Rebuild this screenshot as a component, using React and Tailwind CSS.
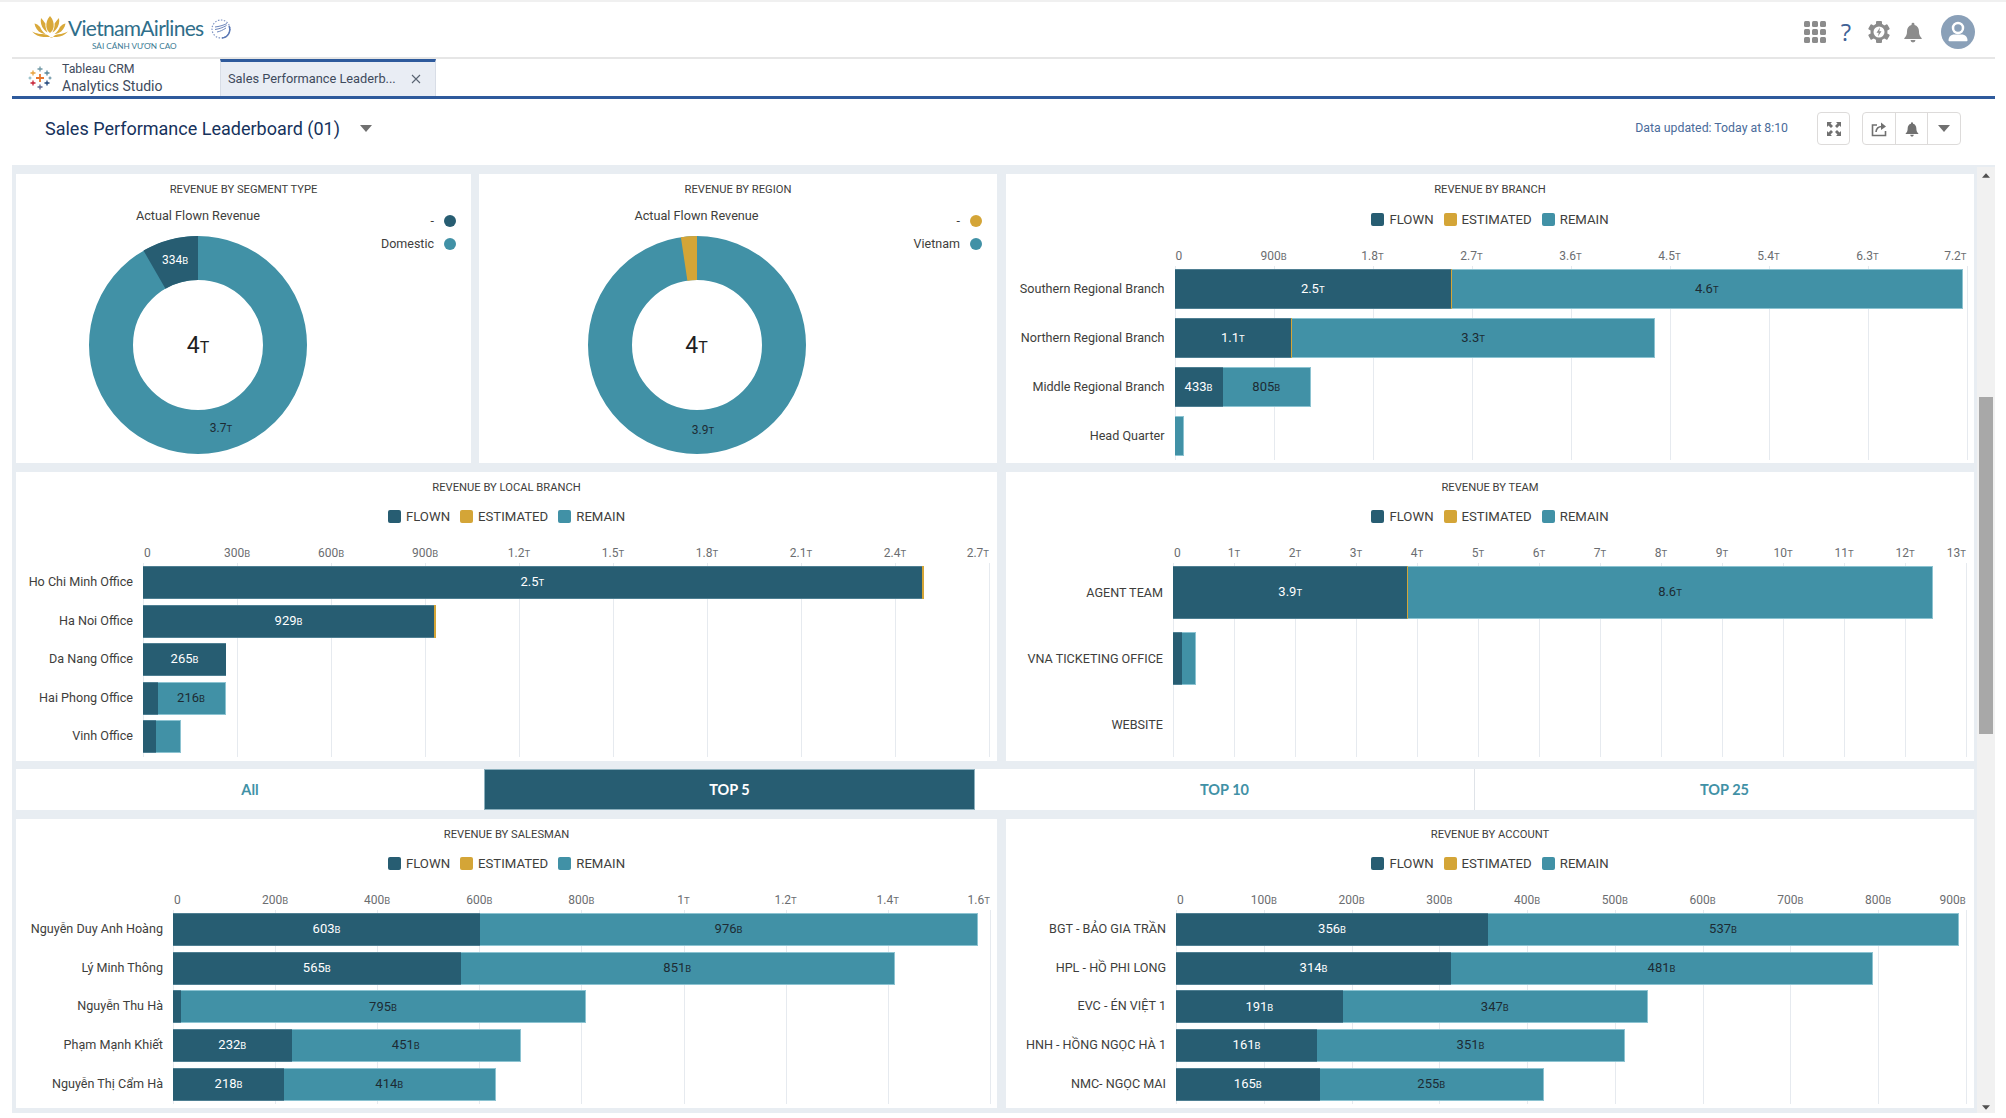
import React from "react";

const DARK = "#275d72";
const TEAL = "#4191a6";
const GOLD = "#d4a537";

function Val({ v, small = 9.5 }) {
  const m = String(v).match(/^(.*?)([TB])$/);
  if (!m) return <span>{v}</span>;
  return (
    <span>
      {m[1]}
      <span style={{ fontSize: small }}>{m[2]}</span>
    </span>
  );
}

function Legend({ h }) {
  const items = [
    ["FLOWN", "bg-[#275d72]"],
    ["ESTIMATED", "bg-[#d4a537]"],
    ["REMAIN", "bg-[#4191a6]"],
  ];
  return (
    <div className="flex items-center justify-center gap-[10px] text-[13.2px] text-[#3e3e3c]" style={{ height: h }}>
      {items.map(([t, c]) => (
        <div key={t} className="flex items-center gap-[5px]">
          <span className={"w-[13px] h-[13px] rounded-[2px] " + c} />
          <span>{t}</span>
        </div>
      ))}
    </div>
  );
}

function Title({ children }) {
  return (
    <div className="h-[32px] pt-[1px] flex items-center justify-center text-[11.2px] text-[#3e3e3c]">{children}</div>
  );
}

function Chart({ className, title, plotLeft, spacing, ticks, rows, barH, step, legendH = 26, labelPb = "pb-[1px]" }) {
  const last = ticks.length - 1;
  return (
    <div className={"bg-white h-[289px] flex flex-col shrink-0 " + className}>
      <Title>{title}</Title>
      <Legend h={legendH} />
      <div className="relative h-[20px] mt-[13px] text-[12px] text-[#6b6d70]">
        {ticks.map((t, i) => {
          const x = plotLeft + i * spacing;
          const tr = i === 0 ? "translate(1px,0)" : i === last ? "translate(-100%,0)" : "translate(-50%,0)";
          return (
            <span key={i} className="absolute top-0 leading-[20px] whitespace-nowrap" style={{ left: x, transform: tr }}>
              <Val v={t} />
            </span>
          );
        })}
      </div>
      <div className="relative h-[194px] pt-[3px] flex flex-col" style={{ gap: step - barH }}>
        {ticks.map((t, i) => (
          <span key={i} className="absolute top-0 bottom-0 w-px bg-[#e6eaef]" style={{ left: plotLeft + i * spacing }} />
        ))}
        {rows.map(([label, f, r, fl, rl, est]) => (
          <div key={label} className="relative flex items-center shrink-0" style={{ height: barH }}>
            <div className={"shrink-0 text-right pr-[10px] text-[12.6px] leading-[16px] text-[#3e3e3c] whitespace-nowrap " + labelPb} style={{ width: plotLeft }}>
              {label}
            </div>
            <div className="flex h-full">
              {f > 0 && (
                <div className="h-full flex items-center justify-center bg-[#275d72] border-y border-[#4f7f92] text-white text-[13px] pb-[1px]" style={{ width: f }}>
                  {fl && <Val v={fl} />}
                </div>
              )}
              {est > 0 && <div className="h-full bg-[#d4a537]" style={{ width: est }} />}
              {r > 0 && (
                <div className="h-full flex items-center justify-center bg-[#4191a6] border-y border-r border-[#8cc3d1] text-[#1d2b33] text-[13px] pb-[1px]" style={{ width: r }}>
                  {rl && <Val v={rl} />}
                </div>
              )}
            </div>
          </div>
        ))}
      </div>
    </div>
  );
}

function arcPath(cx, cy, R, r, a0, a1) {
  const p = (rad, a) => {
    const t = ((a - 90) * Math.PI) / 180;
    return [cx + rad * Math.cos(t), cy + rad * Math.sin(t)].map((n) => n.toFixed(2)).join(" ");
  };
  const large = a1 - a0 > 180 ? 1 : 0;
  return `M${p(R, a0)} A${R} ${R} 0 ${large} 1 ${p(R, a1)} L${p(r, a1)} A${r} ${r} 0 ${large} 0 ${p(r, a0)} Z`;
}

function Donut({ className, title, cx, color, sweep, legend, labels, legendRight }) {
  return (
    <div className={"relative bg-white h-[289px] shrink-0 " + className}>
      <Title>{title}</Title>
      <div className="absolute top-[34px] text-[12.7px] text-[#3e3e3c] leading-[16px] -translate-x-1/2 whitespace-nowrap" style={{ left: cx }}>
        Actual Flown Revenue
      </div>
      <svg className="absolute top-[61px]" style={{ left: cx - 110 }} width="220" height="220" viewBox="0 0 220 220">
        <circle cx="110" cy="110" r="87" fill="none" stroke={TEAL} strokeWidth="44" />
        <path d={arcPath(110, 110, 109, 65, 360 - sweep, 360)} fill={color} />
      </svg>
      <div className="absolute top-[157px] text-[23px] leading-[30px] text-[#1f1f1f] -translate-x-1/2" style={{ left: cx }}>
        <Val v="4T" small={16} />
      </div>
      <div className="absolute top-[39px] flex flex-col gap-[7px] text-[12.5px] text-[#3e3e3c]" style={{ right: legendRight }}>
        {legend.map(([t, c]) => (
          <div key={t} className="flex items-center justify-end gap-[10px] h-[16px]">
            <span>{t}</span>
            <span className="w-[12px] h-[12px] rounded-full" style={{ background: c }} />
          </div>
        ))}
      </div>
      {labels.map(([t, x, y, col]) => (
        <span key={t} className="absolute text-[12px] leading-[14px] -translate-x-1/2 -translate-y-1/2" style={{ left: x, top: y, color: col }}>
          <Val v={t} />
        </span>
      ))}
    </div>
  );
}

function Lotus() {
  return (
    <svg width="36" height="24" viewBox="0 0 36 24" className="shrink-0">
      <g fill="#d9a93a">
        <path d="M18 0c-3 3-4 7-3.6 11 .4 2.6 1.6 4.6 3.6 6 2-1.4 3.2-3.4 3.6-6C22 7 21 3 18 0z" />
        <path d="M9 2c-.8 4 .2 8.4 3 11.6 1 1.2 2.2 2.2 3.6 3-1.6-3-2.4-6-2.2-9C11.8 5.4 10.6 3.4 9 2z" />
        <path d="M27 2c.8 4-.2 8.4-3 11.6-1 1.2-2.2 2.2-3.6 3 1.6-3 2.4-6 2.2-9C24.2 5.4 25.4 3.4 27 2z" />
        <path d="M2.5 7.5c.6 4 3 7.8 7 9.6 1.4.6 2.6.9 4 1-2.6-2-4.4-4.4-5.4-7C6.8 9.4 4.8 8 2.5 7.5z" />
        <path d="M33.5 7.5c-.6 4-3 7.8-7 9.6-1.4.6-2.6.9-4 1 2.6-2 4.4-4.4 5.4-7 1.3-1.7 3.3-3.1 5.6-3.6z" />
        <path d="M0 15.5c3 3.4 7 5.5 11.5 5.5h13c4.5 0 8.500-2.100 11.500-5.500-3 1.500-6 2.500-9.500 2.700-2 .1-4 .9-5.500 2.800-.7.800-2.300.800-3 0-1.500-1.900-3.500-2.700-5.500-2.800C6 18 3 17 0 15.500z" />
      </g>
    </svg>
  );
}

function SkyTeam() {
  return (
    <svg width="20" height="20" viewBox="0 0 20 20" className="shrink-0">
      <circle cx="10" cy="10" r="9" fill="none" stroke="#7f95c4" strokeWidth="1.2" strokeDasharray="1.500 1.500" />
      <path d="M18 7a8.500 8.500 0 0 1-7 12" fill="none" stroke="#5b78b4" strokeWidth="1.500" />
      <g stroke="#6d86bb" strokeWidth="1" fill="none">
        <path d="M4 8c4-.5 8-1.500 12-3.500" />
        <path d="M4 10.500c4-.5 8-2 11.500-4" />
        <path d="M6 13c3-.5 6-2 9-4" />
      </g>
    </svg>
  );
}

function TableauLogo() {
  const plus = (x, y, s, c, w) => (
    <g stroke={c} strokeWidth={w} key={x + "-" + y}>
      <path d={`M${x - s} ${y}H${x + s}M${x} ${y - s}V${y + s}`} />
    </g>
  );
  return (
    <svg width="24" height="24" viewBox="0 0 24 24" className="shrink-0">
      {plus(12, 12, 4, "#e8762c", 1.8)}
      {plus(12, 3, 2.500, "#7099a6", 1.300)}
      {plus(12, 21, 2.500, "#5b6591", 1.300)}
      {plus(5, 7, 2.500, "#e8a33d", 1.300)}
      {plus(19, 7, 2.500, "#59879b", 1.300)}
      {plus(5, 17, 2.500, "#c72035", 1.300)}
      {plus(19, 17, 2.500, "#1f447a", 1.300)}
      {plus(2, 12, 1.500, "#7fb0bd", 1)}
      {plus(22, 12, 1.500, "#59879b", 1)}
    </svg>
  );
}

function Bell({ size = 22, color = "#8c8c8c" }) {
  return (
    <svg width={size} height={size} viewBox="0 0 24 24" fill={color}>
      <path d="M12 2a1.600 1.600 0 0 0-1.600 1.600v.7C7.300 5.100 5.500 7.800 5.500 11c0 4.300-1 5.800-3 7.800v.7h19v-.7c-2-2-3-3.500-3-7.800 0-3.200-1.800-5.900-4.900-6.700v-.7A1.600 1.600 0 0 0 12 2z" />
      <path d="M9.300 20.800h5.400a2.700 2.700 0 0 1-5.400 0z" />
    </svg>
  );
}

function Gear() {
  return (
    <svg width="24" height="24" viewBox="0 0 24 24">
      <g fill="#8c8c8c">
        {[0, 60, 120].map((a) => (
          <rect key={a} x="9" y="1" width="6" height="22" rx="1" transform={`rotate(${a} 12 12)`} />
        ))}
        <circle cx="12" cy="12" r="8.500" />
      </g>
      <circle cx="12" cy="12" r="5.500" fill="#fff" />
      <path d="M13 7.500 9.500 12.800h2.200L11 16.500l3.500-5.300h-2.200z" fill="#8c8c8c" />
    </svg>
  );
}

function AppGrid() {
  const cells = [];
  for (let y = 0; y < 3; y++) for (let x = 0; x < 3; x++) cells.push([x, y]);
  return (
    <svg width="22" height="22" viewBox="0 0 22 22">
      {cells.map(([x, y]) => (
        <rect key={x + "" + y} x={x * 8} y={y * 8} width="6" height="6" rx="1.500" fill="#8c8c8c" />
      ))}
    </svg>
  );
}

function Avatar() {
  return (
    <svg width="34" height="34" viewBox="0 0 34 34">
      <circle cx="17" cy="17" r="17" fill="#8aa0b8" />
      <circle cx="17" cy="13" r="5" fill="none" stroke="#fff" strokeWidth="2.500" />
      <path d="M7.500 25.500c0-4 3-6 5.500-6h8c2.500 0 5.500 2 5.500 6 0 .5-.4.800-.8.800H8.300c-.4 0-.8-.3-.8-.8z" fill="#fff" />
    </svg>
  );
}

function Caret({ w = 12, h = 7, color = "#707070" }) {
  return (
    <svg width={w} height={h} viewBox="0 0 12 7">
      <path d="M0 0h12L6 7z" fill={color} />
    </svg>
  );
}

function ExpandIcon() {
  return (
    <svg width="14" height="14" viewBox="0 0 14 14" fill="#707070">
      <path d="M0 0h5L3.500 1.500 6 4 4 6 1.500 3.500 0 5zM14 0v5l-1.500-1.500L10 6 8 4l2.500-2.500L9 0zM0 14V9l1.500 1.500L4 8l2 2-2.500 2.500L5 14zM14 14H9l1.500-1.500L8 10l2-2 2.500 2.500L14 9z" />
    </svg>
  );
}

function ShareIcon() {
  return (
    <svg width="16" height="16" viewBox="0 0 16 16" fill="none" stroke="#707070" strokeWidth="1.600">
      <path d="M6 4H1.500v10.500h13V10" />
      <path d="M5 11c.3-3.500 2.500-5.500 6-5.500" />
      <path d="M10 1.500 15 5.500 10 9z" fill="#707070" stroke="none" />
    </svg>
  );
}

const branchRows = [
  ["Southern Regional Branch", 276.5, 510.5, "2.5T", "4.6T", 1],
  ["Northern Regional Branch", 116.6, 363, "1.1T", "3.3T", 1],
  ["Middle Regional Branch", 48, 88.5, "433B", "805B"],
  ["Head Quarter", 0, 9],
];
const localRows = [
  ["Ho Chi Minh Office", 778.6, 0, "2.5T", "", 2],
  ["Ha Noi Office", 291, 0, "929B", "", 2],
  ["Da Nang Office", 83, 0, "265B", ""],
  ["Hai Phong Office", 14.5, 68, "", "216B"],
  ["Vinh Office", 12.6, 25, "", ""],
];
const teamRows = [
  ["AGENT TEAM", 234.4, 524.2, "3.9T", "8.6T", 1],
  ["VNA TICKETING OFFICE", 8.6, 14.4],
  ["WEBSITE", 0, 0],
];
const salesRows = [
  ["Nguyễn Duy Anh Hoàng", 307, 498, "603B", "976B"],
  ["Lý Minh Thông", 287.5, 434.5, "565B", "851B"],
  ["Nguyễn Thu Hà", 8, 405, "", "795B"],
  ["Phạm Mạnh Khiết", 118.5, 229.5, "232B", "451B"],
  ["Nguyễn Thị Cẩm Hà", 111, 211.5, "218B", "414B"],
];
const accountRows = [
  ["BGT - BẢO GIA TRẦN", 312, 471, "356B", "537B"],
  ["HPL - HỒ PHI LONG", 275, 422, "314B", "481B"],
  ["EVC - ÉN VIỆT 1", 166.6, 305.4, "191B", "347B"],
  ["HNH - HỒNG NGỌC HÀ 1", 141, 308, "161B", "351B"],
  ["NMC- NGỌC MAI", 143.5, 224.5, "165B", "255B"],
];

export default function App() {
  return (
    <div className="w-[2006px] h-[1118px] overflow-hidden bg-white font-['Roboto',sans-serif] text-[#16325c]">
      <div className="h-[2px] bg-[#f0f0f0]" />
      <header className="h-[55px] flex items-center pl-[32px] pr-[31px]">
        <div className="flex items-center">
          <div className="relative flex flex-col items-start">
            <div className="flex items-center mt-[6px]">
              <Lotus />
              <span className="font-['Lato',sans-serif] text-[21px] leading-[26px] tracking-[-0.7px] text-[#2f6e8a]">VietnamAirlines</span>
              <span className="ml-[8px] mt-[3px]">
                <SkyTeam />
              </span>
            </div>
            <div className="ml-[60px] text-[8.200px] leading-[10px] text-[#3b7a93] font-['Lato',sans-serif]">SẢI CÁNH VƯƠN CAO</div>
          </div>
        </div>
        <div className="ml-auto flex items-center mt-[5px]">
          <AppGrid />
          <span className="ml-[13px] w-[14px] text-center text-[24px] leading-none text-[#3f6296] font-['Open_Sans',sans-serif]">?</span>
          <span className="ml-[14px] flex">
            <Gear />
          </span>
          <span className="ml-[11px] flex">
            <Bell />
          </span>
          <span className="ml-[17px] flex">
            <Avatar />
          </span>
        </div>
      </header>
      <div className="ml-[12px] w-[1983px]">
        <div className="h-[2px] bg-[#e6e6e6]" />
        <div className="h-[37px] flex">
          <div className="w-[208px] flex items-center pl-[16px] gap-[10px]">
            <TableauLogo />
            <div className="text-[#3e4a5c]">
              <div className="text-[12.300px] leading-[16px]">Tableau CRM</div>
              <div className="text-[14px] leading-[18px]">Analytics Studio</div>
            </div>
          </div>
          <div className="w-[216px] border-t-[3px] border-x border-t-[#2e5a9c] border-x-[#d8dde6] bg-[#e9edf4] flex items-center pl-[7px] text-[12.800px] text-[#3e4a5c]">
            <span className="w-[170px] whitespace-nowrap">Sales Performance Leaderb...</span>
            <svg className="ml-[13px]" width="10" height="10" viewBox="0 0 10 10" stroke="#5a6472" strokeWidth="1.100">
              <path d="M1 1l8 8M9 1l-8 8" />
            </svg>
          </div>
        </div>
        <div className="h-[3px] bg-[#2e5a9c]" />
        <div className="h-[66px] flex items-center pl-[33px] pr-[34px] pb-[7px]">
          <span className="text-[18px] text-[#16325c]">Sales Performance Leaderboard (01)</span>
          <span className="ml-[20px] flex">
            <Caret />
          </span>
          <span className="ml-auto text-[12.300px] text-[#4a6b9a]">Data updated: Today at 8:10</span>
          <div className="ml-[29px] w-[33px] h-[33px] rounded-[4px] border border-[#dddbda] flex items-center justify-center">
            <ExpandIcon />
          </div>
          <div className="ml-[12px] w-[99px] h-[33px] rounded-[4px] border border-[#dddbda] flex divide-x divide-[#dddbda]">
            <div className="flex-1 flex items-center justify-center">
              <ShareIcon />
            </div>
            <div className="flex-1 flex items-center justify-center">
              <Bell size={16} color="#707070" />
            </div>
            <div className="flex-1 flex items-center justify-center">
              <Caret color="#707070" />
            </div>
          </div>
        </div>
        <div className="h-[948px] bg-[#e8edf2] flex">
          <div className="w-[1965px] pl-[4px] pt-[9px] flex flex-col">
            <div className="flex">
              <Donut
                className="w-[455px]"
                title="REVENUE BY SEGMENT TYPE"
                cx={182}
                color={DARK}
                sweep={30}
                legendRight={15}
                legend={[["-", DARK], ["Domestic", TEAL]]}
                labels={[["334B", 159, 86, "#ffffff"], ["3.7T", 205, 254, "#1d2b33"]]}
              />
              <Donut
                className="w-[518px] ml-[8px]"
                title="REVENUE BY REGION"
                cx={217.5}
                color={GOLD}
                sweep={8.5}
                legendRight={15}
                legend={[["-", GOLD], ["Vietnam", TEAL]]}
                labels={[["3.9T", 224, 256, "#1d2b33"]]}
              />
              <Chart
                className="w-[968px] ml-[9px]"
                title="REVENUE BY BRANCH"
                plotLeft={168.5}
                spacing={99}
                ticks={["0", "900B", "1.8T", "2.7T", "3.6T", "4.5T", "5.4T", "6.3T", "7.2T"]}
                rows={branchRows}
                barH={40}
                step={49}
                legendH={27}
              />
            </div>
            <div className="flex mt-[9px]">
              <Chart
                className="w-[981px]"
                title="REVENUE BY LOCAL BRANCH"
                plotLeft={127}
                spacing={94}
                ticks={["0", "300B", "600B", "900B", "1.2T", "1.5T", "1.8T", "2.1T", "2.4T", "2.7T"]}
                rows={localRows}
                barH={33}
                step={38.6}
              />
              <Chart
                className="w-[968px] ml-[9px]"
                title="REVENUE BY TEAM"
                plotLeft={167}
                spacing={61}
                ticks={["0", "1T", "2T", "3T", "4T", "5T", "6T", "7T", "8T", "9T", "10T", "11T", "12T", "13T"]}
                rows={teamRows}
                barH={53}
                step={66}
                labelPb="pt-[1px]"
              />
            </div>
            <div className="flex mt-[8px] h-[41px] w-[1958px] bg-white font-['Lato',sans-serif] font-bold text-[14.500px] text-[#4191a6]">
              <div className="w-[468px] flex items-center justify-center">All</div>
              <div className="w-[491px] flex items-center justify-center bg-[#275d72] text-white border border-[#8cb0bd]">TOP 5</div>
              <div className="w-[500px] flex items-center justify-center border-r border-[#dfe3e8]">TOP 10</div>
              <div className="w-[499px] flex items-center justify-center">TOP 25</div>
            </div>
            <div className="flex mt-[9px]">
              <Chart
                className="w-[981px]"
                title="REVENUE BY SALESMAN"
                plotLeft={157}
                spacing={102.1}
                ticks={["0", "200B", "400B", "600B", "800B", "1T", "1.2T", "1.4T", "1.6T"]}
                rows={salesRows}
                barH={33}
                step={38.7}
              />
              <Chart
                className="w-[968px] ml-[9px]"
                title="REVENUE BY ACCOUNT"
                plotLeft={170}
                spacing={87.75}
                ticks={["0", "100B", "200B", "300B", "400B", "500B", "600B", "700B", "800B", "900B"]}
                rows={accountRows}
                barH={33}
                step={38.7}
              />
            </div>
          </div>
          <div className="w-[18px] mt-[2px] bg-[#f1f1f1] flex flex-col items-center">
            <div className="h-[18px] flex items-center justify-center rotate-180">
              <Caret w={8} h={5} color="#505050" />
            </div>
            <div className="mt-[212px] w-[14px] h-[337px] bg-[#a8a8a8]" />
            <div className="mt-auto h-[12px] flex items-center justify-center">
              <Caret w={8} h={5} color="#505050" />
            </div>
          </div>
        </div>
      </div>
    </div>
  );
}
